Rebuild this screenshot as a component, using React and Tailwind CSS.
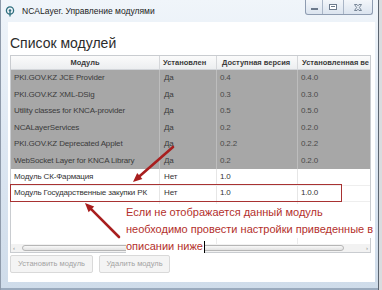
const rows = [
  { name: 'PKI.GOV.KZ JCE Provider', inst: 'Да', avail: '0.4', cur: '0.4.0', grey: true },
  { name: 'PKI.GOV.KZ XML-DSig', inst: 'Да', avail: '0.3', cur: '0.3.0', grey: true },
  { name: 'Utility classes for KNCA-provider', inst: 'Да', avail: '0.5', cur: '0.5.0', grey: true },
  { name: 'NCALayerServices', inst: 'Да', avail: '0.2', cur: '0.2.0', grey: true },
  { name: 'PKI.GOV.KZ Deprecated Applet', inst: 'Да', avail: '0.2.2', cur: '0.2.2', grey: true },
  { name: 'WebSocket Layer for KNCA Library', inst: 'Да', avail: '0.2', cur: '0.2.0', grey: true },
  { name: 'Модуль СК-Фармация', inst: 'Нет', avail: '1.0', cur: '', grey: false },
  { name: 'Модуль Государственные закупки РК', inst: 'Нет', avail: '1.0', cur: '1.0.0', grey: false },
];

const cols = 'grid grid-cols-[149px_57px_81px_110px]';

const TitleIcon = () => (
  <svg width="10" height="11" viewBox="0 0 10 11" fill="none" stroke="#2f6f7e" strokeWidth="1.3">
    <circle cx="5" cy="4.5" r="3.6" />
    <circle cx="5" cy="4.5" r="1.3" fill="#2f6f7e" stroke="none" />
    <path d="M5 5.5 V10.5" />
  </svg>
);

const CaptionButtons = () => (
  <div className="absolute right-[5px] top-0 flex h-[15px] overflow-hidden rounded-b-[3px] border border-t-0 border-[#8e9cb1] bg-gradient-to-b from-[#f3f6fa] to-[#dbe4ef]">
    <div className="flex w-[17px] items-end justify-center border-r border-[#a9b5c6] pb-[4px]">
      <div className="h-[2px] w-[7px] border border-[#6c7a8c] bg-white" />
    </div>
    <div className="flex w-[21px] items-center justify-center border-r border-[#a9b5c6]">
      <div className="h-[6px] w-[8px] border border-[#6c7a8c] bg-white p-[1px]">
        <div className="h-full w-full border-t border-[#6c7a8c]" />
      </div>
    </div>
    <div className="flex w-[28px] items-center justify-center">
      <svg width="8" height="7" viewBox="0 0 8 7" fill="none" stroke="#6c7a8c" strokeWidth="0.9">
        <path d="M0.5 0.5 L3 0.5 L4 1.8 L5 0.5 L7.5 0.5 L5.4 3.5 L7.5 6.5 L5 6.5 L4 5.2 L3 6.5 L0.5 6.5 L2.6 3.5 Z" />
      </svg>
    </div>
  </div>
);

const Arrows = () => (
  <svg className="pointer-events-none absolute left-0 top-0" width="382" height="290">
    <g stroke="#a81f1f" strokeWidth="2.6" strokeLinecap="round" fill="#a81f1f">
      <line x1="173" y1="147" x2="139.8" y2="176.1" />
      <polygon points="133,182 142.4,179.1 137.2,173.1" stroke="none" />
      <line x1="119" y1="237" x2="91.4" y2="209.4" />
      <polygon points="85,203 94.2,206.6 88.6,212.2" stroke="none" />
    </g>
  </svg>
);

export default function App() {
  return (
    <div className="relative flex h-[290px] w-[382px] overflow-hidden bg-[#e4e7ea] font-['Liberation_Sans',Arial,sans-serif]">
      {/* window frame */}
      <div className="flex w-[378px] flex-col border-l border-[#8f9bab] bg-gradient-to-b from-[#f0f5fa] via-[#dde7f2] to-[#cfdcea]">
        {/* title bar */}
        <div className="relative flex h-[22px] items-center pl-[4px]">
          <TitleIcon />
          <span className="ml-[7px] text-[8.5px] text-[#1c1c1c]">NCALayer. Управление модулями</span>
          <CaptionButtons />
        </div>

        <div className="flex flex-1 pl-[7px] pr-[3px]">
          {/* client area */}
          <div className="flex h-[260px] w-[367px] flex-col bg-white pl-[2px]">
            <div className="mb-[3px] mt-[12px] text-[14px] leading-[18px] text-[#2b2b2b]">Список модулей</div>

            {/* table */}
            <div className="flex h-[198px] w-[361px] flex-col overflow-hidden border border-[#c9ccd0]">
              <div className={`${cols} h-[14px] shrink-0 border-b border-[#d2d5d9] bg-gradient-to-b from-[#fbfbfb] to-[#eceef0] text-[7.5px] font-bold text-[#3a3a3a]`}>
                <div className="flex items-center justify-center border-r border-[#d5d7da]">Модуль</div>
                <div className="flex items-center overflow-hidden whitespace-nowrap border-r border-[#d5d7da] pl-[3px]">Установлен</div>
                <div className="flex items-center whitespace-nowrap border-r border-[#d5d7da] pl-[5px]">Доступная версия</div>
                <div className="flex items-center overflow-hidden whitespace-nowrap pl-[4px]">Установленная ве</div>
              </div>

              {rows.map((r) => (
                <div
                  key={r.name}
                  className={`${cols} h-[16.5px] shrink-0 text-[8px] tracking-[-0.15px] ${r.grey ? 'bg-[#a7a7a7] text-[#3b3b3b]' : 'border-b border-[#eeeeee] bg-white text-[#333]'}`}
                >
                  <div className={`flex items-center whitespace-nowrap border-r pl-[3px] ${r.grey ? 'border-[#bdbdbd]' : 'border-[#e6e6e6]'}`}>{r.name}</div>
                  <div className={`flex items-center border-r pl-[4px] ${r.grey ? 'border-[#bdbdbd]' : 'border-[#e6e6e6]'}`}>{r.inst}</div>
                  <div className={`flex items-center border-r pl-[3px] ${r.grey ? 'border-[#bdbdbd] text-[#4a4a4a]' : 'border-[#e6e6e6]'}`}>{r.avail}</div>
                  <div className={`flex items-center pl-[3px] ${r.grey ? 'text-[#4a4a4a]' : ''}`}>{r.cur}</div>
                </div>
              ))}

              {/* empty space */}
              <div className={`${cols} flex-1`}>
                <div className="border-r border-[#ececec]" />
                <div className="border-r border-[#ececec]" />
                <div className="border-r border-[#ececec]" />
                <div />
              </div>

              {/* horizontal scrollbar */}
              <div className="flex h-[8px] shrink-0 items-center bg-[#f2f2f2] px-[2px]">
                <span className="w-[7px] text-[6px] leading-none text-[#8a8a8a]">‹</span>
                <div className="ml-[2px] h-[6px] w-[322px] rounded-[3px] border border-[#b6b6b6] bg-gradient-to-b from-[#f8f8f8] to-[#e2e2e2]" />
                <span className="ml-auto w-[7px] text-right text-[6px] leading-none text-[#8a8a8a]">›</span>
              </div>
            </div>

            {/* buttons */}
            <div className="mt-[2px] flex gap-[6px]">
              <button className="h-[18px] w-[83px] rounded-[2px] border border-[#d9d9d9] bg-[#f4f4f4] text-[7.5px] text-[#a3a3a3]">Установить модуль</button>
              <button className="h-[18px] w-[71px] rounded-[2px] border border-[#d9d9d9] bg-[#f4f4f4] text-[7.5px] text-[#a3a3a3]">Удалить модуль</button>
            </div>
          </div>
        </div>

        {/* bottom frame */}
        <div className="h-[8px] border-b-2 border-[#9aaabd]" />
      </div>

      {/* background behind window */}
      <div className="w-[4px] border-l border-[#5c6570] bg-[#d9dcdf]" />

      {/* annotation */}
      <div className="absolute left-[10px] top-[184px] h-[18px] w-[332px] border-[1.5px] border-[#a83232]" />
      <Arrows />
      <div className="absolute left-[126px] top-[204px] text-[11px] leading-[17px] text-[#b3302c]">
        <div className="w-fit whitespace-nowrap bg-white">Если не отображается данный модуль</div>
        <div className="w-fit whitespace-nowrap bg-white">необходимо провести настройки приведенные в</div>
        <div className="flex w-fit items-center whitespace-nowrap bg-white">
          описании ниже
          <span className="ml-[1px] inline-block h-[12px] w-px bg-black" />
        </div>
      </div>
    </div>
  );
}
